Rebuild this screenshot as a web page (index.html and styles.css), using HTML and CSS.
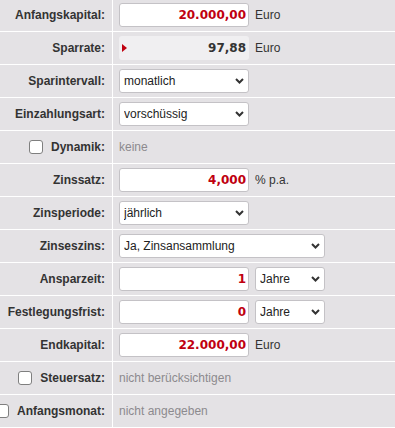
FILE: index.html
```html
<!DOCTYPE html>
<html lang="de">
<head>
<meta charset="utf-8">
<title>Sparrechner</title>
<link rel="stylesheet" href="styles.css">
</head>
<body>
<div class="form">
  <div class="row">
    <div class="lbl">Anfangskapital:</div>
    <div class="val"><input class="num" type="text" value="20.000,00"><span class="unit">Euro</span></div>
  </div>
  <div class="row">
    <div class="lbl">Sparrate:</div>
    <div class="val"><div class="calc"><span class="tri"></span><span>97,88</span></div><span class="unit">Euro</span></div>
  </div>
  <div class="row">
    <div class="lbl">Sparintervall:</div>
    <div class="val"><div class="sel"><select><option>monatlich</option></select><svg class="chev" width="9" height="6" viewBox="0 0 9 6"><path d="M1 1L4.5 4.5L8 1" fill="none" stroke="#333" stroke-width="2"/></svg></div></div>
  </div>
  <div class="row">
    <div class="lbl">Einzahlungsart:</div>
    <div class="val"><div class="sel"><select><option>vorschüssig</option></select><svg class="chev" width="9" height="6" viewBox="0 0 9 6"><path d="M1 1L4.5 4.5L8 1" fill="none" stroke="#333" stroke-width="2"/></svg></div></div>
  </div>
  <div class="row">
    <div class="lbl"><input class="cb" type="checkbox"><span>Dynamik:</span></div>
    <div class="val"><span class="muted">keine</span></div>
  </div>
  <div class="row">
    <div class="lbl">Zinssatz:</div>
    <div class="val"><input class="num" type="text" value="4,000"><span class="unit">% p.a.</span></div>
  </div>
  <div class="row">
    <div class="lbl">Zinsperiode:</div>
    <div class="val"><div class="sel"><select><option>jährlich</option></select><svg class="chev" width="9" height="6" viewBox="0 0 9 6"><path d="M1 1L4.5 4.5L8 1" fill="none" stroke="#333" stroke-width="2"/></svg></div></div>
  </div>
  <div class="row">
    <div class="lbl">Zinseszins:</div>
    <div class="val"><div class="sel wide"><select><option>Ja, Zinsansammlung</option></select><svg class="chev" width="9" height="6" viewBox="0 0 9 6"><path d="M1 1L4.5 4.5L8 1" fill="none" stroke="#333" stroke-width="2"/></svg></div></div>
  </div>
  <div class="row">
    <div class="lbl">Ansparzeit:</div>
    <div class="val"><input class="num" type="text" value="1"><div class="sel small"><select><option>Jahre</option></select><svg class="chev" width="9" height="6" viewBox="0 0 9 6"><path d="M1 1L4.5 4.5L8 1" fill="none" stroke="#333" stroke-width="2"/></svg></div></div>
  </div>
  <div class="row">
    <div class="lbl">Festlegungsfrist:</div>
    <div class="val"><input class="num" type="text" value="0"><div class="sel small"><select><option>Jahre</option></select><svg class="chev" width="9" height="6" viewBox="0 0 9 6"><path d="M1 1L4.5 4.5L8 1" fill="none" stroke="#333" stroke-width="2"/></svg></div></div>
  </div>
  <div class="row">
    <div class="lbl">Endkapital:</div>
    <div class="val"><input class="num" type="text" value="22.000,00"><span class="unit">Euro</span></div>
  </div>
  <div class="row">
    <div class="lbl"><input class="cb" type="checkbox"><span>Steuersatz:</span></div>
    <div class="val"><span class="muted">nicht berücksichtigen</span></div>
  </div>
  <div class="row">
    <div class="lbl"><input class="cb" type="checkbox"><span>Anfangsmonat:</span></div>
    <div class="val"><span class="muted">nicht angegeben</span></div>
  </div>
</div>
</body>
</html>
```

FILE: styles.css
```css
* { box-sizing: border-box; }
html, body {
  margin: 0;
  padding: 0;
  background: #e4e2e5;
  overflow: hidden;
}
body {
  font-family: "Liberation Sans", Arial, sans-serif;
  font-size: 12px;
  color: #333;
}
.form {
  margin-top: -1px;
  display: flex;
  flex-direction: column;
}
.row {
  display: flex;
  height: 33px;
  border-bottom: 1px solid #fff;
}
.lbl {
  width: 113px;
  flex: none;
  border-right: 1px solid #fff;
  padding-right: 7px;
  display: flex;
  align-items: center;
  justify-content: flex-end;
  gap: 8px;
  font-weight: bold;
  white-space: nowrap;
  color: #333;
}
.val {
  flex: 1;
  padding-left: 6px;
  display: flex;
  align-items: center;
  gap: 6px;
  white-space: nowrap;
}
.num {
  width: 130px;
  height: 24px;
  margin: 0;
  border: 1px solid #c4c2c6;
  border-radius: 3px;
  background: #fff;
  padding: 0 2px 0 3px;
  text-align: right;
  font-family: "DejaVu Sans", Verdana, sans-serif;
  font-weight: bold;
  font-size: 12px;
  color: #c00010;
  outline: none;
}
.calc {
  width: 130px;
  height: 24px;
  border-radius: 3px;
  background: #f0eff1;
  display: flex;
  align-items: center;
  justify-content: space-between;
  padding: 0 3px 0 3px;
  font-family: "DejaVu Sans", Verdana, sans-serif;
  font-weight: bold;
  font-size: 12px;
  color: #333;
}
.tri {
  width: 0;
  height: 0;
  border-left: 5px solid #c00010;
  border-top: 4.5px solid transparent;
  border-bottom: 4.5px solid transparent;
}
.unit {
  color: #333;
}
.muted {
  color: #8c8a8e;
}
.sel {
  position: relative;
  width: 130px;
  height: 24px;
}
.sel.wide { width: 206px; }
.sel.small { width: 70px; }
.sel select {
  -webkit-appearance: none;
  appearance: none;
  width: 100%;
  height: 100%;
  margin: 0;
  border: 1px solid #c4c2c6;
  border-radius: 3px;
  background: #fff;
  padding: 0 16px 0 4px;
  font-family: "Liberation Sans", Arial, sans-serif;
  font-size: 12px;
  color: #222;
  outline: none;
}
.chev {
  position: absolute;
  right: 5px;
  top: 9px;
  pointer-events: none;
}
.cb {
  -webkit-appearance: none;
  appearance: none;
  flex: none;
  width: 14px;
  height: 14px;
  margin: 0;
  border: 1px solid #7f7f7f;
  border-radius: 3px;
  background: #fff;
}
```
